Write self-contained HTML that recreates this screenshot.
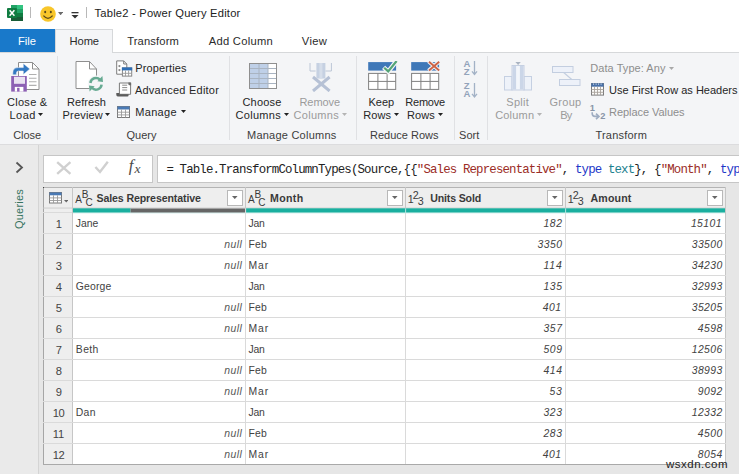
<!DOCTYPE html>
<html lang="en"><head><meta charset="utf-8"><title>Table2 - Power Query Editor</title>
<style>
html,body{margin:0;padding:0}
body{width:739px;height:474px;overflow:hidden;position:relative;background:#e6e6e6;font-family:"Liberation Sans",sans-serif}
.a{position:absolute;display:block}
.t{position:absolute;white-space:pre;display:block}
</style></head>
<body>
<div class="a" style="left:0px;top:0px;width:739px;height:29px;background:#ffffff;"></div>
<div class="a" style="left:0px;top:29px;width:739px;height:24px;background:#ffffff;"></div>
<div class="a" style="left:0px;top:52px;width:739px;height:1px;background:#d6d8da;"></div>
<div class="a" style="left:0px;top:53px;width:739px;height:91px;background:#f4f5f7;"></div>
<div class="a" style="left:0px;top:144px;width:739px;height:1px;background:#dcdcde;"></div>
<div class="a" style="left:0px;top:145px;width:38px;height:329px;background:#eaeaea;"></div>
<div class="a" style="left:38px;top:145px;width:1px;height:329px;background:#d4d4d4;"></div>
<svg class="a" style="left:7px;top:5px" width="16" height="16" viewBox="0 0 16 16">
<rect x="4" y="0" width="12" height="16" rx="1" fill="#21a366"/>
<rect x="4" y="0" width="6" height="4" fill="#21a366"/><rect x="10" y="0" width="6" height="4" fill="#33c481"/>
<rect x="4" y="4" width="6" height="4" fill="#107c41"/><rect x="10" y="4" width="6" height="4" fill="#21a366"/>
<rect x="4" y="8" width="6" height="4" fill="#185c37"/><rect x="10" y="8" width="6" height="4" fill="#107c41"/>
<rect x="4" y="12" width="12" height="4" fill="#185c37"/>
<rect x="0" y="3" width="10" height="10" rx="1" fill="#107c41"/>
<path d="M2.6 5.2L7.4 10.8M7.4 5.2L2.6 10.8" stroke="#fff" stroke-width="1.5"/>
</svg>
<div class="a" style="left:30px;top:7px;width:1px;height:11px;background:#b8b8b8;"></div>
<svg class="a" style="left:40px;top:5.5px" width="16" height="16" viewBox="0 0 16 16">
<circle cx="8" cy="8" r="7.8" fill="#f8c62a"/>
<ellipse cx="5.2" cy="6" rx="1" ry="1.3" fill="#5a4a1a"/><ellipse cx="10.8" cy="6" rx="1" ry="1.3" fill="#5a4a1a"/>
<path d="M3.4 9.6Q8 15 12.6 9.6" fill="none" stroke="#5a4a1a" stroke-width="1.2"/>
</svg>
<svg class="a" style="left:57.9px;top:11.9px" width="5.2" height="3.3" viewBox="0 0 5.2 3.3"><path d="M0 0H5.2L2.6 3.3Z" fill="#6a6a6a"/></svg>
<svg class="a" style="left:71px;top:10.6px" width="8" height="8" viewBox="0 0 8 8"><rect x="0.5" y="1" width="7" height="1.3" fill="#333"/><path d="M0.5 4H7.5L4 7.4Z" fill="#333"/></svg>
<div class="a" style="left:86px;top:7px;width:1px;height:11px;background:#b8b8b8;"></div>
<span id="title" class="t" style="left:94.50px;top:5.12px;font-size:11.2px;line-height:16px;color:#222;font-family:'Liberation Sans', sans-serif;letter-spacing:0.203px;">Table2 - Power Query Editor</span>
<div class="a" style="left:0px;top:29px;width:55px;height:23px;background:#1979ca;"></div>
<span id="tab_file" class="t" style="left:18.00px;top:33.12px;font-size:11.2px;line-height:16px;color:#ffffff;font-family:'Liberation Sans', sans-serif;letter-spacing:-0.008px;">File</span>
<div class="a" style="left:55px;top:29px;width:58px;height:24px;background:#f4f5f7;border:1px solid #d6d8da;border-bottom:none;box-sizing:border-box;"></div>
<span id="tab_home" class="t" style="left:69.50px;top:33.12px;font-size:11.2px;line-height:16px;color:#2b2b2b;font-family:'Liberation Sans', sans-serif;letter-spacing:-0.086px;">Home</span>
<span id="tab_transform" class="t" style="left:127.20px;top:33.12px;font-size:11.2px;line-height:16px;color:#2b2b2b;font-family:'Liberation Sans', sans-serif;letter-spacing:0.137px;">Transform</span>
<span id="tab_add" class="t" style="left:208.80px;top:33.12px;font-size:11.2px;line-height:16px;color:#2b2b2b;font-family:'Liberation Sans', sans-serif;letter-spacing:0.262px;">Add Column</span>
<span id="tab_view" class="t" style="left:301.80px;top:33.12px;font-size:11.2px;line-height:16px;color:#2b2b2b;font-family:'Liberation Sans', sans-serif;letter-spacing:0.338px;">View</span>
<div class="a" style="left:57px;top:56px;width:1px;height:84px;background:#e0e1e4;"></div>
<div class="a" style="left:229px;top:56px;width:1px;height:84px;background:#e0e1e4;"></div>
<div class="a" style="left:356px;top:56px;width:1px;height:84px;background:#e0e1e4;"></div>
<div class="a" style="left:454px;top:56px;width:1px;height:84px;background:#e0e1e4;"></div>
<div class="a" style="left:487px;top:56px;width:1px;height:84px;background:#e0e1e4;"></div>
<svg class="a" style="left:11px;top:62px" width="29" height="30" viewBox="0 0 29 30">
<path d="M7.5 0.5H21.5L28 7V27.5H7.5Z" fill="#fff" stroke="#8e8e8e"/>
<path d="M21.5 0.5V7H28" fill="none" stroke="#8e8e8e"/>
<path d="M18 12.5H25.5M18 16.2H25.5M18 19.8H25.5M18 23.4H25.5" stroke="#b0b0b0" stroke-width="1.1"/>
<rect x="0.2" y="14" width="15.6" height="15.6" fill="#8d60b4"/>
<rect x="3" y="14.8" width="11" height="7" fill="#e9e2f1"/>
<rect x="3.8" y="24.9" width="8.6" height="4.7" fill="#fff"/><rect x="6.1" y="25.8" width="2.4" height="3.8" fill="#8d60b4"/>
<path d="M1.8 12.8V11Q1.8 5.6 7.2 5.6H12.3V1.4L18.8 6.9L12.3 12.6V9H7.6Q5.4 9 5.4 11.2V12.8Z" fill="#3379c2" stroke="#f4f5f7" stroke-width="0.5"/>
</svg>
<span id="close1" class="t" style="left:7.00px;top:94.19px;font-size:11px;line-height:16px;color:#262626;font-family:'Liberation Sans', sans-serif;letter-spacing:0.281px;">Close &amp;</span>
<span id="close2" class="t" style="left:9.50px;top:107.19px;font-size:11px;line-height:16px;color:#262626;font-family:'Liberation Sans', sans-serif;letter-spacing:0.504px;">Load</span>
<svg class="a" style="left:38.2px;top:113px" width="5" height="3" viewBox="0 0 5 3"><path d="M0 0H5L2.5 3Z" fill="#222"/></svg>
<span id="g_close" class="t" style="left:13.25px;top:127.19px;font-size:11px;line-height:16px;color:#3c3c3c;font-family:'Liberation Sans', sans-serif;letter-spacing:-0.075px;">Close</span>
<svg class="a" style="left:75px;top:61px" width="29" height="31" viewBox="0 0 29 31">
<path d="M1 0.5H14.5L21.5 8V27.5H1Z" fill="#fff" stroke="#8e8e8e"/>
<path d="M14.5 0.5V8H21.5" fill="none" stroke="#8e8e8e"/>
<circle cx="21" cy="22.8" r="8.2" fill="#f4f5f7"/>
<path d="M15.4 22A5.6 5.6 0 0 1 25 18.7" fill="none" stroke="#66aa92" stroke-width="2.5"/>
<path d="M22.4 20.3L28 21L27.4 15Z" fill="#66aa92"/>
<path d="M26.6 23.6A5.6 5.6 0 0 1 17 26.9" fill="none" stroke="#66aa92" stroke-width="2.5"/>
<path d="M19.6 25.3L14 24.6L14.6 30.6Z" fill="#66aa92"/>
</svg>
<span id="ref1" class="t" style="left:67.00px;top:94.19px;font-size:11px;line-height:16px;color:#262626;font-family:'Liberation Sans', sans-serif;letter-spacing:0.067px;">Refresh</span>
<span id="ref2" class="t" style="left:62.50px;top:107.19px;font-size:11px;line-height:16px;color:#262626;font-family:'Liberation Sans', sans-serif;letter-spacing:0.196px;">Preview</span>
<svg class="a" style="left:105px;top:113px" width="5" height="3" viewBox="0 0 5 3"><path d="M0 0H5L2.5 3Z" fill="#222"/></svg>
<svg class="a" style="left:116px;top:59.5px" width="17" height="17" viewBox="0 0 17 17">
<path d="M0.7 0.9H7.7L10.8 4V14.2H0.7Z" fill="#fff" stroke="#7d7d7d"/>
<path d="M7.7 0.9V4H10.8" fill="none" stroke="#7d7d7d"/>
<circle cx="3.4" cy="6.1" r="1.1" fill="#8a8a8a"/><circle cx="3.4" cy="10.1" r="1.1" fill="#8a8a8a"/>
<rect x="6.4" y="7.9" width="9.3" height="8.2" fill="#fff" stroke="#858585"/>
<rect x="5.9" y="7.4" width="10.3" height="3" fill="#2f6eb5"/>
<path d="M9.5 10.4V16.1M12.6 10.4V16.1M6.4 13.3H15.7" stroke="#9a9a9a" stroke-width="0.9"/>
</svg>
<span id="prop" class="t" style="left:135.20px;top:60.19px;font-size:11px;line-height:16px;color:#262626;font-family:'Liberation Sans', sans-serif;letter-spacing:0.136px;">Properties</span>
<svg class="a" style="left:116px;top:82px" width="16" height="15" viewBox="0 0 16 15">
<path d="M3.4 1H14.6V12.3H3.4Z" fill="#fff" stroke="#7a7a7a"/>
<path d="M12.4 0.6H15.1V3.2H13.4Q12.4 3.2 12.4 2Z" fill="#6a6a6a"/>
<path d="M6.2 3.2H11.2M6.2 5.6H11.2M6.2 8H11.2" stroke="#8c8c8c" stroke-width="1"/>
<path d="M0.3 11H3.4V12.3H12.6V13.2Q12.6 14.4 11.4 14.4H1.8Q0.3 14.4 0.3 12.8Z" fill="#5c5c5c"/>
</svg>
<span id="adv" class="t" style="left:134.90px;top:82.19px;font-size:11px;line-height:16px;color:#262626;font-family:'Liberation Sans', sans-serif;letter-spacing:0.232px;">Advanced Editor</span>
<svg class="a" style="left:117px;top:106px" width="13" height="12" viewBox="0 0 13 12">
<rect x="0.5" y="0.5" width="12" height="11" fill="#fff" stroke="#7a7a7a"/>
<rect x="0.5" y="0.5" width="12" height="3" fill="#4a7ab5"/>
<path d="M4.5 3.5V11.5M8.5 3.5V11.5M0.5 6.2H12.5M0.5 8.9H12.5" stroke="#9a9a9a" stroke-width="0.9"/>
</svg>
<span id="manage" class="t" style="left:135.20px;top:104.19px;font-size:11px;line-height:16px;color:#262626;font-family:'Liberation Sans', sans-serif;letter-spacing:0.339px;">Manage</span>
<svg class="a" style="left:181px;top:110.2px" width="5" height="3" viewBox="0 0 5 3"><path d="M0 0H5L2.5 3Z" fill="#222"/></svg>
<span id="g_query" class="t" style="left:126.50px;top:127.19px;font-size:11px;line-height:16px;color:#3c3c3c;font-family:'Liberation Sans', sans-serif;letter-spacing:0.006px;">Query</span>
<svg class="a" style="left:249px;top:63px" width="28" height="26" viewBox="0 0 28 26">
<rect x="0.5" y="0.5" width="27" height="25" fill="#fff" stroke="#9a9a9a"/>
<rect x="1" y="1" width="18" height="24" fill="#bfd0e8"/>
<path d="M10 0.5V25.5M19 0.5V25.5M0.5 5.5H27.5M0.5 10.5H27.5M0.5 15.5H27.5M0.5 20.5H27.5" stroke="#a9b4c2" stroke-width="1"/>
<rect x="0.5" y="0.5" width="27" height="25" fill="none" stroke="#8f8f8f"/>
</svg>
<span id="ch1" class="t" style="left:242.50px;top:94.19px;font-size:11px;line-height:16px;color:#262626;font-family:'Liberation Sans', sans-serif;letter-spacing:0.180px;">Choose</span>
<span id="ch2" class="t" style="left:235.50px;top:107.19px;font-size:11px;line-height:16px;color:#262626;font-family:'Liberation Sans', sans-serif;letter-spacing:0.299px;">Columns</span>
<svg class="a" style="left:283.5px;top:113px" width="5" height="3" viewBox="0 0 5 3"><path d="M0 0H5L2.5 3Z" fill="#222"/></svg>
<svg class="a" style="left:308px;top:62px" width="25" height="30" viewBox="0 0 25 30">
<path d="M2 1V9H7.6M23.4 1V9H17.4" fill="none" stroke="#bcc6d6" stroke-width="1"/>
<rect x="8.4" y="1" width="9" height="15.5" fill="#c6d1e2"/>
<rect x="11.4" y="1" width="3" height="15.5" fill="#d6deea"/>
<path d="M5 15L21.6 29M21.6 15L5 29" stroke="#b6c1d5" stroke-width="3"/>
</svg>
<span id="rc1" class="t" style="left:299.50px;top:94.19px;font-size:11px;line-height:16px;color:#9b9b9b;font-family:'Liberation Sans', sans-serif;letter-spacing:-0.078px;">Remove</span>
<span id="rc2" class="t" style="left:293.50px;top:107.19px;font-size:11px;line-height:16px;color:#9b9b9b;font-family:'Liberation Sans', sans-serif;letter-spacing:0.299px;">Columns</span>
<svg class="a" style="left:341.5px;top:113px" width="5" height="3" viewBox="0 0 5 3"><path d="M0 0H5L2.5 3Z" fill="#b4b4b4"/></svg>
<span id="g_mc" class="t" style="left:247.00px;top:127.19px;font-size:11px;line-height:16px;color:#3c3c3c;font-family:'Liberation Sans', sans-serif;letter-spacing:0.234px;">Manage Columns</span>
<svg class="a" style="left:367.5px;top:61px" width="31" height="30" viewBox="0 0 31 30">
<rect x="0.2" y="1.1" width="27.9" height="8.5" fill="#3f78b8"/>
<rect x="0.6" y="12.4" width="27.1" height="16" fill="#fff" stroke="#808080"/>
<path d="M9.9 12.4V28.4M19.1 12.4V28.4M0.6 20.4H27.7" stroke="#808080"/>

<path d="M15.6 6.4L20.2 10.6L29 -0.6" fill="none" stroke="#f4f5f7" stroke-width="4.6"/>
<path d="M16.2 6.8L20.2 10.4L28.6 0" fill="none" stroke="#55a577" stroke-width="2.2"/>
</svg>
<span id="kr1" class="t" style="left:368.50px;top:94.19px;font-size:11px;line-height:16px;color:#262626;font-family:'Liberation Sans', sans-serif;letter-spacing:0.012px;">Keep</span>
<span id="kr2" class="t" style="left:363.25px;top:107.19px;font-size:11px;line-height:16px;color:#262626;font-family:'Liberation Sans', sans-serif;letter-spacing:0.059px;">Rows</span>
<svg class="a" style="left:393.8px;top:113px" width="5" height="3" viewBox="0 0 5 3"><path d="M0 0H5L2.5 3Z" fill="#222"/></svg>
<svg class="a" style="left:410.5px;top:61px" width="31" height="30" viewBox="0 0 31 30">
<rect x="0.2" y="1.1" width="27.9" height="8.5" fill="#3f78b8"/>
<rect x="0.6" y="12.4" width="27.1" height="16" fill="#fff" stroke="#808080"/>
<path d="M9.9 12.4V28.4M19.1 12.4V28.4M0.6 20.4H27.7" stroke="#808080"/>

<path d="M17.5 0.3L28.5 9.8M28.5 0.3L17.5 9.8" stroke="#f4f5f7" stroke-width="4"/>
<path d="M18 0.8L28.2 9.4M28.2 0.8L18 9.4" stroke="#cc6346" stroke-width="1.9"/>
</svg>
<span id="rr1" class="t" style="left:405.25px;top:94.19px;font-size:11px;line-height:16px;color:#262626;font-family:'Liberation Sans', sans-serif;letter-spacing:-0.203px;">Remove</span>
<span id="rr2" class="t" style="left:407.00px;top:107.19px;font-size:11px;line-height:16px;color:#262626;font-family:'Liberation Sans', sans-serif;letter-spacing:0.121px;">Rows</span>
<svg class="a" style="left:438px;top:113px" width="5" height="3" viewBox="0 0 5 3"><path d="M0 0H5L2.5 3Z" fill="#222"/></svg>
<span id="g_rr" class="t" style="left:370.00px;top:127.19px;font-size:11px;line-height:16px;color:#3c3c3c;font-family:'Liberation Sans', sans-serif;letter-spacing:0.001px;">Reduce Rows</span>
<span id="s_a1" class="t" style="left:463.50px;top:55.51px;font-size:9.5px;line-height:16px;color:#92a3ba;font-family:'Liberation Sans', sans-serif;letter-spacing:0.425px;font-weight:700;">A</span>
<span id="s_z1" class="t" style="left:463.70px;top:63.51px;font-size:9.5px;line-height:16px;color:#92a3ba;font-family:'Liberation Sans', sans-serif;letter-spacing:0.188px;font-weight:700;">Z</span>
<svg class="a" style="left:470.8px;top:61px" width="7" height="15" viewBox="0 0 7 15"><path d="M3.5 0V13M1 10.3L3.5 13.4L6 10.3" fill="none" stroke="#a3b2c6" stroke-width="1.3"/></svg>
<span id="s_z2" class="t" style="left:463.70px;top:77.51px;font-size:9.5px;line-height:16px;color:#92a3ba;font-family:'Liberation Sans', sans-serif;letter-spacing:0.188px;font-weight:700;">Z</span>
<span id="s_a2" class="t" style="left:463.50px;top:85.71px;font-size:9.5px;line-height:16px;color:#92a3ba;font-family:'Liberation Sans', sans-serif;letter-spacing:0.425px;font-weight:700;">A</span>
<svg class="a" style="left:470.8px;top:82.5px" width="7" height="15" viewBox="0 0 7 15"><path d="M3.5 0V13.5M1 10.8L3.5 13.9L6 10.8" fill="none" stroke="#a3b2c6" stroke-width="1.3"/></svg>
<span id="g_sort" class="t" style="left:459.00px;top:127.19px;font-size:11px;line-height:16px;color:#3c3c3c;font-family:'Liberation Sans', sans-serif;letter-spacing:0.078px;">Sort</span>
<svg class="a" style="left:503px;top:61px" width="30" height="30" viewBox="0 0 30 30">
<path d="M12.4 1H17.8L15.1 4Z" fill="#aab4c2"/>
<rect x="1.5" y="15.5" width="7.5" height="13.5" fill="#eef2f9" stroke="#c5d0e2"/>
<rect x="21" y="15.5" width="7.5" height="13.5" fill="#eef2f9" stroke="#c5d0e2"/>
<rect x="9" y="4.5" width="12" height="24.5" fill="#f3f6fb" stroke="#c5d0e2"/>
<rect x="9.5" y="5" width="3.6" height="23.5" fill="#cbd6e8"/>
<rect x="16.9" y="5" width="3.6" height="23.5" fill="#cbd6e8"/>
</svg>
<span id="sp1" class="t" style="left:506.30px;top:94.19px;font-size:11px;line-height:16px;color:#9b9b9b;font-family:'Liberation Sans', sans-serif;letter-spacing:0.299px;">Split</span>
<span id="sp2" class="t" style="left:495.20px;top:107.19px;font-size:11px;line-height:16px;color:#9b9b9b;font-family:'Liberation Sans', sans-serif;letter-spacing:0.182px;">Column</span>
<svg class="a" style="left:537px;top:113px" width="5" height="3" viewBox="0 0 5 3"><path d="M0 0H5L2.5 3Z" fill="#b4b4b4"/></svg>
<svg class="a" style="left:546px;top:65px" width="35" height="22" viewBox="0 0 35 22">
<rect x="6.5" y="1.5" width="20.5" height="6" fill="#edf1f9" stroke="#c3cee0"/>
<rect x="13.5" y="14.5" width="20.5" height="6" fill="#edf1f9" stroke="#c3cee0"/>
<path d="M17.7 7.5L25.8 14.5" fill="none" stroke="#c3cee0" stroke-width="1.1"/>
</svg>
<span id="gb1" class="t" style="left:549.50px;top:94.19px;font-size:11px;line-height:16px;color:#9b9b9b;font-family:'Liberation Sans', sans-serif;letter-spacing:0.284px;">Group</span>
<span id="gb2" class="t" style="left:560.20px;top:107.19px;font-size:11px;line-height:16px;color:#9b9b9b;font-family:'Liberation Sans', sans-serif;letter-spacing:-0.772px;">By</span>
<span id="dt" class="t" style="left:590.25px;top:60.19px;font-size:11px;line-height:16px;color:#8e8e8e;font-family:'Liberation Sans', sans-serif;letter-spacing:0.060px;">Data Type: Any</span>
<svg class="a" style="left:669px;top:67px" width="5" height="3" viewBox="0 0 5 3"><path d="M0 0H5L2.5 3Z" fill="#a8a8a8"/></svg>
<svg class="a" style="left:591px;top:82.9px" width="13" height="13" viewBox="0 0 13 13">
<rect x="0.5" y="0.5" width="12" height="11.6" fill="#fbfaf8" stroke="#7c7c7c"/>
<rect x="0.3" y="0.3" width="12.4" height="3.4" fill="#4870a8"/>
<path d="M2.6 0.3V2M5.1 0.3V2M7.6 0.3V2M10.1 0.3V2" stroke="#c9d6ea" stroke-width="0.8"/>
<path d="M3.5 3.7V12M6.5 3.7V12M9.5 3.7V12M0.5 6.5H12.5M0.5 9.3H12.5" stroke="#a9a39c" stroke-width="0.9"/>
</svg>
<span id="ufr" class="t" style="left:609.00px;top:82.19px;font-size:11px;line-height:16px;color:#262626;font-family:'Liberation Sans', sans-serif;letter-spacing:0.005px;">Use First Row as Headers</span>
<span id="rv_1" class="t" style="left:589.70px;top:99.58px;font-size:9.3px;line-height:16px;color:#8995a8;font-family:'Liberation Sans', sans-serif;letter-spacing:-0.572px;font-weight:700;">1</span>
<span id="rv_2" class="t" style="left:600.30px;top:108.38px;font-size:9.3px;line-height:16px;color:#8995a8;font-family:'Liberation Sans', sans-serif;letter-spacing:0.828px;font-weight:700;">2</span>
<svg class="a" style="left:590px;top:110.5px" width="11" height="9" viewBox="0 0 11 9"><path d="M2.2 1.2V2.6Q2.2 5.4 5 5.4H8.4M6 2.6L9 5.4L6 8.2" fill="none" stroke="#9fadc2" stroke-width="1.6"/></svg>
<span id="rv" class="t" style="left:609.00px;top:104.19px;font-size:11px;line-height:16px;color:#8e8e8e;font-family:'Liberation Sans', sans-serif;letter-spacing:-0.052px;">Replace Values</span>
<span id="g_tr" class="t" style="left:595.50px;top:127.19px;font-size:11px;line-height:16px;color:#3c3c3c;font-family:'Liberation Sans', sans-serif;letter-spacing:0.198px;">Transform</span>
<svg class="a" style="left:15px;top:161px" width="9" height="13" viewBox="0 0 9 13"><path d="M1.5 1.5L7 6.5L1.5 11.5" fill="none" stroke="#555" stroke-width="1.8"/></svg>
<span id="queries" class="t" style="left:18.5px;top:209.2px;font-size:11px;line-height:16px;color:#37735f;transform:translate(-50%,-50%) rotate(-90deg);letter-spacing:0.2px">Queries</span>
<div class="a" style="left:43px;top:155px;width:110px;height:28px;background:#fff;border:1px solid #c6c6c6;box-sizing:border-box;"></div>
<svg class="a" style="left:56px;top:161px" width="16" height="14" viewBox="0 0 16 14"><path d="M1.2 1.2L14.4 12.8M14.4 1.2L1.2 12.8" stroke="#d0d0d0" stroke-width="2.4"/></svg>
<svg class="a" style="left:94px;top:161px" width="16" height="14" viewBox="0 0 16 14"><path d="M1.4 6L6 11L13.8 0.8" fill="none" stroke="#d0d0d0" stroke-width="2.4"/></svg>
<span id="fx_f" class="t" style="left:128.80px;top:158.48px;font-size:16.5px;line-height:16px;color:#4a4a4a;font-family:'Liberation Serif', serif;letter-spacing:3.906px;font-style:italic;">f</span>
<span id="fx_x" class="t" style="left:134.50px;top:161.32px;font-size:13.5px;line-height:16px;color:#4a4a4a;font-family:'Liberation Serif', serif;letter-spacing:1.500px;font-style:italic;">x</span>
<div class="a" style="left:157px;top:155px;width:600px;height:28px;background:#fff;border:1px solid #c6c6c6;box-sizing:border-box;"></div>
<span id="f1" class="t" style="left:166.40px;top:161.90px;font-size:12.4px;line-height:16px;color:#222;font-family:'Liberation Mono', monospace;letter-spacing:-0.846px;">= Table.TransformColumnTypes(Source,{{</span>
<span id="f2" class="t" style="left:416.82px;top:161.90px;font-size:12.4px;line-height:16px;color:#9b2d26;font-family:'Liberation Mono', monospace;letter-spacing:-0.846px;">&quot;Sales Representative&quot;</span>
<span id="f3" class="t" style="left:561.80px;top:161.90px;font-size:12.4px;line-height:16px;color:#222;font-family:'Liberation Mono', monospace;letter-spacing:-0.848px;">, </span>
<span id="f4" class="t" style="left:574.98px;top:161.90px;font-size:12.4px;line-height:16px;color:#1d36c8;font-family:'Liberation Mono', monospace;letter-spacing:-0.847px;">type</span>
<span id="f5" class="t" style="left:601.34px;top:161.90px;font-size:12.4px;line-height:16px;color:#222;font-family:'Liberation Mono', monospace;letter-spacing:-0.847px;"> </span>
<span id="f6" class="t" style="left:607.93px;top:161.90px;font-size:12.4px;line-height:16px;color:#1b7f8e;font-family:'Liberation Mono', monospace;letter-spacing:-0.847px;">text</span>
<span id="f7" class="t" style="left:634.29px;top:161.90px;font-size:12.4px;line-height:16px;color:#222;font-family:'Liberation Mono', monospace;letter-spacing:-0.847px;">}, {</span>
<span id="f8" class="t" style="left:660.65px;top:161.90px;font-size:12.4px;line-height:16px;color:#9b2d26;font-family:'Liberation Mono', monospace;letter-spacing:-0.848px;">&quot;Month&quot;</span>
<span id="f9" class="t" style="left:706.78px;top:161.90px;font-size:12.4px;line-height:16px;color:#222;font-family:'Liberation Mono', monospace;letter-spacing:-0.848px;">, </span>
<span id="f10" class="t" style="left:719.96px;top:161.90px;font-size:12.4px;line-height:16px;color:#1d36c8;font-family:'Liberation Mono', monospace;letter-spacing:-0.847px;">type</span>
<div class="a" style="left:43px;top:187px;width:683px;height:278px;background:#fff;"></div>
<div class="a" style="left:43px;top:187px;width:683px;height:21px;background:#eeeeee;"></div>
<div class="a" style="left:43px;top:187px;width:30px;height:278px;background:#eeeeee;"></div>
<div class="a" style="left:43px;top:187px;width:683px;height:1px;background:#b4b4b4;"></div>
<div class="a" style="left:43px;top:187px;width:1px;height:278px;background:#a6a6a6;"></div>
<div class="a" style="left:43px;top:212px;width:30px;height:1px;background:#dadada;"></div>
<div class="a" style="left:72px;top:187px;width:1px;height:278px;background:#c6c6c6;"></div>
<div class="a" style="left:245px;top:187px;width:1px;height:278px;background:#dadada;"></div>
<div class="a" style="left:405px;top:187px;width:1px;height:278px;background:#dadada;"></div>
<div class="a" style="left:565px;top:187px;width:1px;height:278px;background:#dadada;"></div>
<div class="a" style="left:725px;top:187px;width:1px;height:278px;background:#c6c6c6;"></div>
<div class="a" style="left:72px;top:187px;width:1px;height:21px;background:#c6c6c6;"></div>
<div class="a" style="left:245px;top:187px;width:1px;height:21px;background:#c6c6c6;"></div>
<div class="a" style="left:405px;top:187px;width:1px;height:21px;background:#c6c6c6;"></div>
<div class="a" style="left:565px;top:187px;width:1px;height:21px;background:#c6c6c6;"></div>
<div class="a" style="left:43px;top:187px;width:1px;height:1px;background:#444;"></div>
<svg class="a" style="left:43px;top:207px" width="683" height="7" viewBox="0 0 683 7">
<rect x="0" y="0.6" width="683" height="0.9" fill="#c9c9c9"/>
<rect x="30" y="1.3" width="57.5" height="4.4" fill="#1aaf9f"/>
<rect x="87.5" y="1.5" width="115" height="4.2" fill="#666"/>
<rect x="203" y="1.3" width="479" height="4.4" fill="#1aaf9f"/>
<rect x="30" y="5.7" width="652" height="0.6" fill="#bfe9e4"/>
<rect x="202.2" y="1.3" width="0.9" height="4.6" fill="#e8e8e8"/>
<rect x="362.2" y="1.3" width="0.9" height="4.6" fill="#c5ece8"/>
<rect x="522.2" y="1.3" width="0.9" height="4.6" fill="#c5ece8"/>
</svg>
<div class="a" style="left:43px;top:233px;width:683px;height:1px;background:#dadada;"></div>
<div class="a" style="left:43px;top:254px;width:683px;height:1px;background:#dadada;"></div>
<div class="a" style="left:43px;top:275px;width:683px;height:1px;background:#dadada;"></div>
<div class="a" style="left:43px;top:296px;width:683px;height:1px;background:#dadada;"></div>
<div class="a" style="left:43px;top:317px;width:683px;height:1px;background:#dadada;"></div>
<div class="a" style="left:43px;top:338px;width:683px;height:1px;background:#dadada;"></div>
<div class="a" style="left:43px;top:359px;width:683px;height:1px;background:#dadada;"></div>
<div class="a" style="left:43px;top:380px;width:683px;height:1px;background:#dadada;"></div>
<div class="a" style="left:43px;top:401px;width:683px;height:1px;background:#dadada;"></div>
<div class="a" style="left:43px;top:422px;width:683px;height:1px;background:#dadada;"></div>
<div class="a" style="left:43px;top:443px;width:683px;height:1px;background:#dadada;"></div>
<div class="a" style="left:43px;top:464px;width:683px;height:1px;background:#dadada;"></div>
<div class="a" style="left:43px;top:464px;width:683px;height:1px;background:#a9a9a9;"></div>
<svg class="a" style="left:49px;top:192px" width="13" height="12" viewBox="0 0 13 12">
<rect x="0.5" y="0.5" width="12" height="10.5" fill="#fff" stroke="#7a7a7a"/>
<rect x="0.5" y="0.5" width="12" height="2.8" fill="#4a7ab5"/>
<path d="M4.5 3.3V11M8.5 3.3V11M0.5 5.9H12.5M0.5 8.5H12.5" stroke="#9a9a9a" stroke-width="0.9"/>
</svg>
<svg class="a" style="left:63.5px;top:200px" width="4.5" height="2.6" viewBox="0 0 4.5 2.6"><path d="M0 0H4.5L2.25 2.6Z" fill="#666"/></svg>
<span class="t" style="left:75.30px;top:191.53px;font-size:10px;line-height:16px;color:#3a3a3a;font-weight:400">A</span>
<span class="t" style="left:81.80px;top:186.53px;font-size:10px;line-height:16px;color:#3a3a3a;font-weight:400">B</span>
<span class="t" style="left:85.60px;top:194.53px;font-size:10px;line-height:16px;color:#3a3a3a;font-weight:400">C</span>
<span id="h1t" class="t" style="left:96.50px;top:190.33px;font-size:10.6px;line-height:16px;color:#3a3a3a;font-family:'Liberation Sans', sans-serif;letter-spacing:-0.115px;font-weight:700;">Sales Representative</span>
<div class="a" style="left:227px;top:190px;width:16px;height:16px;background:#fff;border:1px solid #b8b8b8;box-sizing:border-box;"></div>
<svg class="a" style="left:232.3px;top:195.9px" width="5.6" height="3.1" viewBox="0 0 5.6 3.1"><path d="M0 0H5.6L2.8 3.1Z" fill="#666"/></svg>
<span class="t" style="left:248.00px;top:191.53px;font-size:10px;line-height:16px;color:#3a3a3a;font-weight:400">A</span>
<span class="t" style="left:254.50px;top:186.53px;font-size:10px;line-height:16px;color:#3a3a3a;font-weight:400">B</span>
<span class="t" style="left:258.30px;top:194.53px;font-size:10px;line-height:16px;color:#3a3a3a;font-weight:400">C</span>
<span id="h2t" class="t" style="left:270.00px;top:190.33px;font-size:10.6px;line-height:16px;color:#3a3a3a;font-family:'Liberation Sans', sans-serif;letter-spacing:0.344px;font-weight:700;">Month</span>
<div class="a" style="left:387px;top:190px;width:16px;height:16px;background:#fff;border:1px solid #b8b8b8;box-sizing:border-box;"></div>
<svg class="a" style="left:392.3px;top:195.9px" width="5.6" height="3.1" viewBox="0 0 5.6 3.1"><path d="M0 0H5.6L2.8 3.1Z" fill="#666"/></svg>
<span class="t" style="left:407.70px;top:190.89px;font-size:10.7px;line-height:16px;color:#3a3a3a;font-weight:400">1</span>
<span class="t" style="left:412.70px;top:186.89px;font-size:10.7px;line-height:16px;color:#3a3a3a;font-weight:400">2</span>
<span class="t" style="left:417.70px;top:192.99px;font-size:10.7px;line-height:16px;color:#3a3a3a;font-weight:400">3</span>
<span id="h3t" class="t" style="left:430.30px;top:190.33px;font-size:10.6px;line-height:16px;color:#3a3a3a;font-family:'Liberation Sans', sans-serif;letter-spacing:-0.169px;font-weight:700;">Units Sold</span>
<div class="a" style="left:547px;top:190px;width:16px;height:16px;background:#fff;border:1px solid #b8b8b8;box-sizing:border-box;"></div>
<svg class="a" style="left:552.3px;top:195.9px" width="5.6" height="3.1" viewBox="0 0 5.6 3.1"><path d="M0 0H5.6L2.8 3.1Z" fill="#666"/></svg>
<span class="t" style="left:567.70px;top:190.89px;font-size:10.7px;line-height:16px;color:#3a3a3a;font-weight:400">1</span>
<span class="t" style="left:572.70px;top:186.89px;font-size:10.7px;line-height:16px;color:#3a3a3a;font-weight:400">2</span>
<span class="t" style="left:577.70px;top:192.99px;font-size:10.7px;line-height:16px;color:#3a3a3a;font-weight:400">3</span>
<span id="h4t" class="t" style="left:590.50px;top:190.33px;font-size:10.6px;line-height:16px;color:#3a3a3a;font-family:'Liberation Sans', sans-serif;letter-spacing:0.164px;font-weight:700;">Amount</span>
<div class="a" style="left:707px;top:190px;width:16px;height:16px;background:#fff;border:1px solid #b8b8b8;box-sizing:border-box;"></div>
<svg class="a" style="left:712.3px;top:195.9px" width="5.6" height="3.1" viewBox="0 0 5.6 3.1"><path d="M0 0H5.6L2.8 3.1Z" fill="#666"/></svg>
<span id="n0" class="t" style="left:55.70px;top:216.12px;font-size:11.2px;line-height:16px;color:#444;font-family:'Liberation Sans', sans-serif;letter-spacing:-0.834px;">1</span>
<span id="c1_0" class="t" style="left:75.80px;top:216.10px;font-size:10.4px;line-height:16px;color:#424242;font-family:'Liberation Sans', sans-serif;letter-spacing:-0.012px;">Jane</span>
<span id="c2_0" class="t" style="left:248.50px;top:216.10px;font-size:10.4px;line-height:16px;color:#424242;font-family:'Liberation Sans', sans-serif;letter-spacing:-0.189px;">Jan</span>
<span id="c3_0" class="t" style="left:543.50px;top:216.10px;font-size:10.4px;line-height:16px;color:#424242;font-family:'Liberation Sans', sans-serif;letter-spacing:0.552px;font-style:italic;">182</span>
<span id="c4_0" class="t" style="left:690.90px;top:216.10px;font-size:10.4px;line-height:16px;color:#424242;font-family:'Liberation Sans', sans-serif;letter-spacing:0.419px;font-style:italic;">15101</span>
<span id="n1" class="t" style="left:55.70px;top:237.12px;font-size:11.2px;line-height:16px;color:#444;font-family:'Liberation Sans', sans-serif;letter-spacing:-0.834px;">2</span>
<span id="c1_1" class="t" style="left:224.30px;top:237.10px;font-size:10.4px;line-height:16px;color:#555;font-family:'Liberation Sans', sans-serif;letter-spacing:0.453px;font-style:italic;">null</span>
<span id="c2_1" class="t" style="left:248.50px;top:237.10px;font-size:10.4px;line-height:16px;color:#424242;font-family:'Liberation Sans', sans-serif;letter-spacing:0.198px;">Feb</span>
<span id="c3_1" class="t" style="left:537.50px;top:237.10px;font-size:10.4px;line-height:16px;color:#424242;font-family:'Liberation Sans', sans-serif;letter-spacing:0.469px;font-style:italic;">3350</span>
<span id="c4_1" class="t" style="left:691.70px;top:237.10px;font-size:10.4px;line-height:16px;color:#424242;font-family:'Liberation Sans', sans-serif;letter-spacing:0.419px;font-style:italic;">33500</span>
<span id="n2" class="t" style="left:55.70px;top:258.12px;font-size:11.2px;line-height:16px;color:#444;font-family:'Liberation Sans', sans-serif;letter-spacing:-0.834px;">3</span>
<span id="c1_2" class="t" style="left:224.30px;top:258.10px;font-size:10.4px;line-height:16px;color:#555;font-family:'Liberation Sans', sans-serif;letter-spacing:0.453px;font-style:italic;">null</span>
<span id="c2_2" class="t" style="left:248.50px;top:258.10px;font-size:10.4px;line-height:16px;color:#424242;font-family:'Liberation Sans', sans-serif;letter-spacing:0.865px;">Mar</span>
<span id="c3_2" class="t" style="left:543.50px;top:258.10px;font-size:10.4px;line-height:16px;color:#424242;font-family:'Liberation Sans', sans-serif;letter-spacing:0.807px;font-style:italic;">114</span>
<span id="c4_2" class="t" style="left:691.70px;top:258.10px;font-size:10.4px;line-height:16px;color:#424242;font-family:'Liberation Sans', sans-serif;letter-spacing:0.419px;font-style:italic;">34230</span>
<span id="n3" class="t" style="left:55.70px;top:279.12px;font-size:11.2px;line-height:16px;color:#444;font-family:'Liberation Sans', sans-serif;letter-spacing:-0.834px;">4</span>
<span id="c1_3" class="t" style="left:75.80px;top:279.10px;font-size:10.4px;line-height:16px;color:#424242;font-family:'Liberation Sans', sans-serif;letter-spacing:0.155px;">George</span>
<span id="c2_3" class="t" style="left:248.50px;top:279.10px;font-size:10.4px;line-height:16px;color:#424242;font-family:'Liberation Sans', sans-serif;letter-spacing:-0.189px;">Jan</span>
<span id="c3_3" class="t" style="left:543.50px;top:279.10px;font-size:10.4px;line-height:16px;color:#424242;font-family:'Liberation Sans', sans-serif;letter-spacing:0.552px;font-style:italic;">135</span>
<span id="c4_3" class="t" style="left:691.70px;top:279.10px;font-size:10.4px;line-height:16px;color:#424242;font-family:'Liberation Sans', sans-serif;letter-spacing:0.419px;font-style:italic;">32993</span>
<span id="n4" class="t" style="left:55.70px;top:300.12px;font-size:11.2px;line-height:16px;color:#444;font-family:'Liberation Sans', sans-serif;letter-spacing:-0.834px;">5</span>
<span id="c1_4" class="t" style="left:224.30px;top:300.10px;font-size:10.4px;line-height:16px;color:#555;font-family:'Liberation Sans', sans-serif;letter-spacing:0.453px;font-style:italic;">null</span>
<span id="c2_4" class="t" style="left:248.50px;top:300.10px;font-size:10.4px;line-height:16px;color:#424242;font-family:'Liberation Sans', sans-serif;letter-spacing:0.198px;">Feb</span>
<span id="c3_4" class="t" style="left:542.70px;top:300.10px;font-size:10.4px;line-height:16px;color:#424242;font-family:'Liberation Sans', sans-serif;letter-spacing:0.552px;font-style:italic;">401</span>
<span id="c4_4" class="t" style="left:691.70px;top:300.10px;font-size:10.4px;line-height:16px;color:#424242;font-family:'Liberation Sans', sans-serif;letter-spacing:0.419px;font-style:italic;">35205</span>
<span id="n5" class="t" style="left:55.70px;top:321.12px;font-size:11.2px;line-height:16px;color:#444;font-family:'Liberation Sans', sans-serif;letter-spacing:-0.834px;">6</span>
<span id="c1_5" class="t" style="left:224.30px;top:321.10px;font-size:10.4px;line-height:16px;color:#555;font-family:'Liberation Sans', sans-serif;letter-spacing:0.453px;font-style:italic;">null</span>
<span id="c2_5" class="t" style="left:248.50px;top:321.10px;font-size:10.4px;line-height:16px;color:#424242;font-family:'Liberation Sans', sans-serif;letter-spacing:0.865px;">Mar</span>
<span id="c3_5" class="t" style="left:543.50px;top:321.10px;font-size:10.4px;line-height:16px;color:#424242;font-family:'Liberation Sans', sans-serif;letter-spacing:0.552px;font-style:italic;">357</span>
<span id="c4_5" class="t" style="left:697.70px;top:321.10px;font-size:10.4px;line-height:16px;color:#424242;font-family:'Liberation Sans', sans-serif;letter-spacing:0.469px;font-style:italic;">4598</span>
<span id="n6" class="t" style="left:55.70px;top:342.12px;font-size:11.2px;line-height:16px;color:#444;font-family:'Liberation Sans', sans-serif;letter-spacing:-0.834px;">7</span>
<span id="c1_6" class="t" style="left:75.80px;top:342.10px;font-size:10.4px;line-height:16px;color:#424242;font-family:'Liberation Sans', sans-serif;letter-spacing:0.406px;">Beth</span>
<span id="c2_6" class="t" style="left:248.50px;top:342.10px;font-size:10.4px;line-height:16px;color:#424242;font-family:'Liberation Sans', sans-serif;letter-spacing:-0.189px;">Jan</span>
<span id="c3_6" class="t" style="left:543.50px;top:342.10px;font-size:10.4px;line-height:16px;color:#424242;font-family:'Liberation Sans', sans-serif;letter-spacing:0.552px;font-style:italic;">509</span>
<span id="c4_6" class="t" style="left:691.70px;top:342.10px;font-size:10.4px;line-height:16px;color:#424242;font-family:'Liberation Sans', sans-serif;letter-spacing:0.419px;font-style:italic;">12506</span>
<span id="n7" class="t" style="left:55.70px;top:363.12px;font-size:11.2px;line-height:16px;color:#444;font-family:'Liberation Sans', sans-serif;letter-spacing:-0.834px;">8</span>
<span id="c1_7" class="t" style="left:224.30px;top:363.10px;font-size:10.4px;line-height:16px;color:#555;font-family:'Liberation Sans', sans-serif;letter-spacing:0.453px;font-style:italic;">null</span>
<span id="c2_7" class="t" style="left:248.50px;top:363.10px;font-size:10.4px;line-height:16px;color:#424242;font-family:'Liberation Sans', sans-serif;letter-spacing:0.198px;">Feb</span>
<span id="c3_7" class="t" style="left:543.50px;top:363.10px;font-size:10.4px;line-height:16px;color:#424242;font-family:'Liberation Sans', sans-serif;letter-spacing:0.552px;font-style:italic;">414</span>
<span id="c4_7" class="t" style="left:691.70px;top:363.10px;font-size:10.4px;line-height:16px;color:#424242;font-family:'Liberation Sans', sans-serif;letter-spacing:0.419px;font-style:italic;">38993</span>
<span id="n8" class="t" style="left:55.70px;top:384.12px;font-size:11.2px;line-height:16px;color:#444;font-family:'Liberation Sans', sans-serif;letter-spacing:-0.834px;">9</span>
<span id="c1_8" class="t" style="left:224.30px;top:384.10px;font-size:10.4px;line-height:16px;color:#555;font-family:'Liberation Sans', sans-serif;letter-spacing:0.453px;font-style:italic;">null</span>
<span id="c2_8" class="t" style="left:248.50px;top:384.10px;font-size:10.4px;line-height:16px;color:#424242;font-family:'Liberation Sans', sans-serif;letter-spacing:0.865px;">Mar</span>
<span id="c3_8" class="t" style="left:549.50px;top:384.10px;font-size:10.4px;line-height:16px;color:#424242;font-family:'Liberation Sans', sans-serif;letter-spacing:0.719px;font-style:italic;">53</span>
<span id="c4_8" class="t" style="left:697.70px;top:384.10px;font-size:10.4px;line-height:16px;color:#424242;font-family:'Liberation Sans', sans-serif;letter-spacing:0.469px;font-style:italic;">9092</span>
<span id="n9" class="t" style="left:52.70px;top:405.12px;font-size:11.2px;line-height:16px;color:#444;font-family:'Liberation Sans', sans-serif;letter-spacing:-0.527px;">10</span>
<span id="c1_9" class="t" style="left:75.80px;top:405.10px;font-size:10.4px;line-height:16px;color:#424242;font-family:'Liberation Sans', sans-serif;letter-spacing:0.312px;">Dan</span>
<span id="c2_9" class="t" style="left:248.50px;top:405.10px;font-size:10.4px;line-height:16px;color:#424242;font-family:'Liberation Sans', sans-serif;letter-spacing:-0.189px;">Jan</span>
<span id="c3_9" class="t" style="left:543.50px;top:405.10px;font-size:10.4px;line-height:16px;color:#424242;font-family:'Liberation Sans', sans-serif;letter-spacing:0.552px;font-style:italic;">323</span>
<span id="c4_9" class="t" style="left:691.70px;top:405.10px;font-size:10.4px;line-height:16px;color:#424242;font-family:'Liberation Sans', sans-serif;letter-spacing:0.419px;font-style:italic;">12332</span>
<span id="n10" class="t" style="left:52.70px;top:426.12px;font-size:11.2px;line-height:16px;color:#444;font-family:'Liberation Sans', sans-serif;letter-spacing:-0.112px;">11</span>
<span id="c1_10" class="t" style="left:224.30px;top:426.10px;font-size:10.4px;line-height:16px;color:#555;font-family:'Liberation Sans', sans-serif;letter-spacing:0.453px;font-style:italic;">null</span>
<span id="c2_10" class="t" style="left:248.50px;top:426.10px;font-size:10.4px;line-height:16px;color:#424242;font-family:'Liberation Sans', sans-serif;letter-spacing:0.198px;">Feb</span>
<span id="c3_10" class="t" style="left:543.50px;top:426.10px;font-size:10.4px;line-height:16px;color:#424242;font-family:'Liberation Sans', sans-serif;letter-spacing:0.552px;font-style:italic;">283</span>
<span id="c4_10" class="t" style="left:697.70px;top:426.10px;font-size:10.4px;line-height:16px;color:#424242;font-family:'Liberation Sans', sans-serif;letter-spacing:0.469px;font-style:italic;">4500</span>
<span id="n11" class="t" style="left:52.70px;top:447.12px;font-size:11.2px;line-height:16px;color:#444;font-family:'Liberation Sans', sans-serif;letter-spacing:-0.527px;">12</span>
<span id="c1_11" class="t" style="left:224.30px;top:447.10px;font-size:10.4px;line-height:16px;color:#555;font-family:'Liberation Sans', sans-serif;letter-spacing:0.453px;font-style:italic;">null</span>
<span id="c2_11" class="t" style="left:248.50px;top:447.10px;font-size:10.4px;line-height:16px;color:#424242;font-family:'Liberation Sans', sans-serif;letter-spacing:0.865px;">Mar</span>
<span id="c3_11" class="t" style="left:542.70px;top:447.10px;font-size:10.4px;line-height:16px;color:#424242;font-family:'Liberation Sans', sans-serif;letter-spacing:0.552px;font-style:italic;">401</span>
<span id="c4_11" class="t" style="left:697.70px;top:447.10px;font-size:10.4px;line-height:16px;color:#424242;font-family:'Liberation Sans', sans-serif;letter-spacing:0.469px;font-style:italic;">8054</span>
<span id="wm" class="t" style="left:666.00px;top:456.02px;font-size:11.5px;line-height:16px;color:#1c1c1c;font-family:'Liberation Sans', sans-serif;letter-spacing:0.497px;">wsxdn.com</span>
</body></html>
